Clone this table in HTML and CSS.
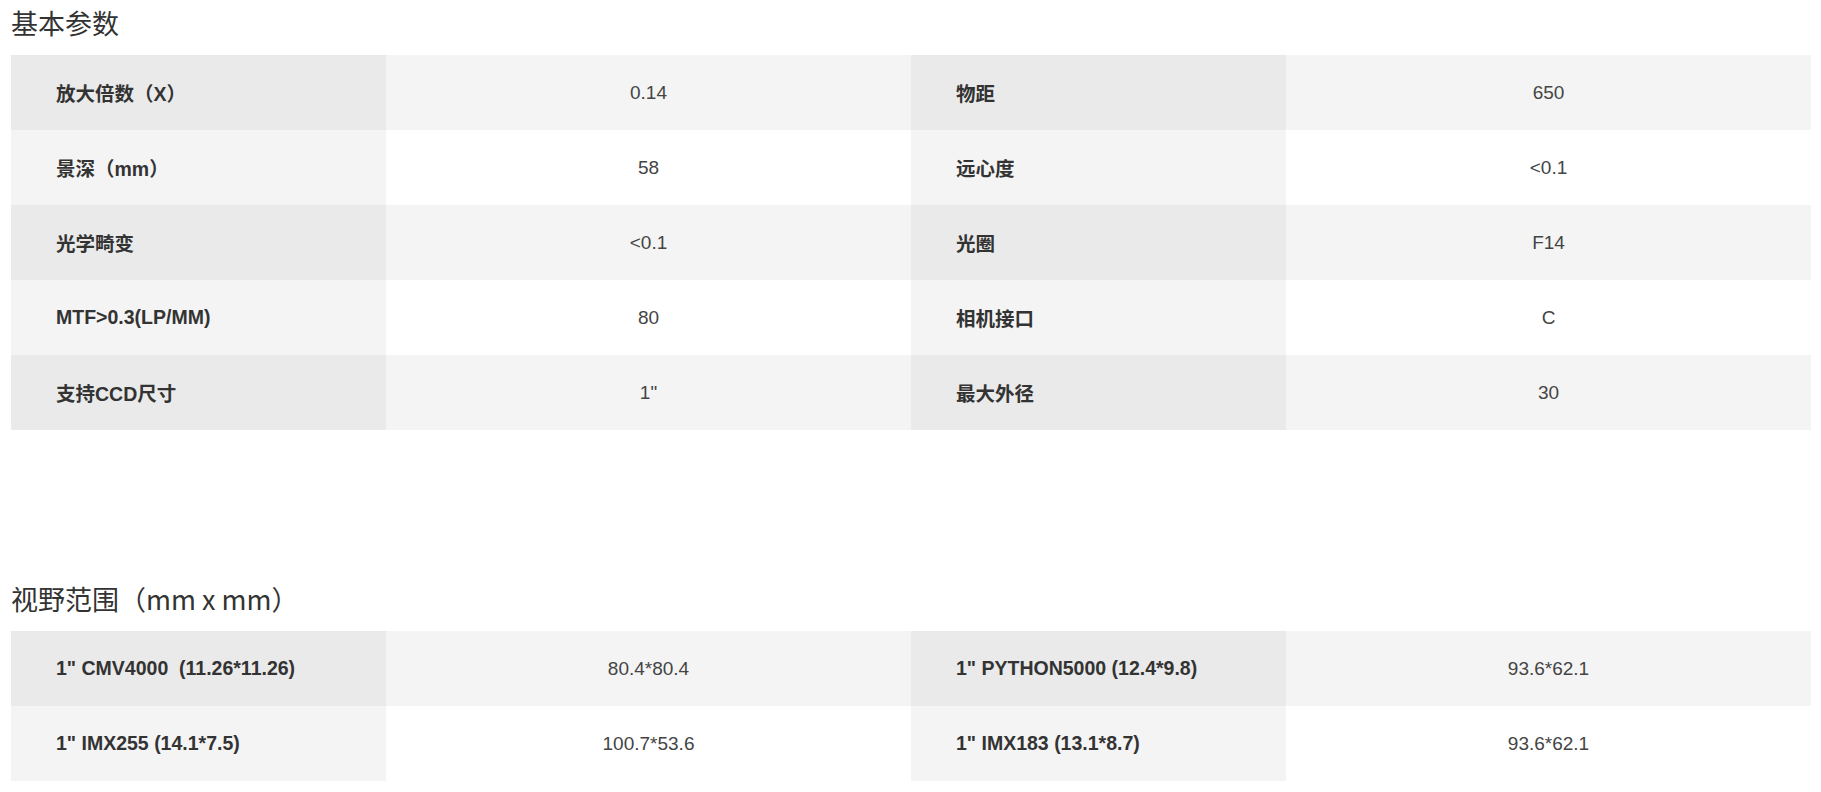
FILE: index.html
```html
<!DOCTYPE html>
<html lang="zh-CN">
<head>
<meta charset="utf-8">
<title>参数</title>
<link rel="stylesheet" href="styles.css">
</head>
<body>
<div class="page">
  <section class="section">
    <h2 class="section-title">基本参数</h2>
    <table class="spec">
      <colgroup>
        <col class="c-label"><col class="c-value"><col class="c-label"><col class="c-value">
      </colgroup>
      <tbody>
        <tr>
          <td class="label">放大倍数（X）</td><td class="value">0.14</td>
          <td class="label">物距</td><td class="value">650</td>
        </tr>
        <tr>
          <td class="label">景深（mm）</td><td class="value">58</td>
          <td class="label">远心度</td><td class="value">&lt;0.1</td>
        </tr>
        <tr>
          <td class="label">光学畸变</td><td class="value">&lt;0.1</td>
          <td class="label">光圈</td><td class="value">F14</td>
        </tr>
        <tr>
          <td class="label">MTF&gt;0.3(LP/MM)</td><td class="value">80</td>
          <td class="label">相机接口</td><td class="value">C</td>
        </tr>
        <tr>
          <td class="label">支持CCD尺寸</td><td class="value">1&quot;</td>
          <td class="label">最大外径</td><td class="value">30</td>
        </tr>
      </tbody>
    </table>
  </section>

  <section class="section section-second">
    <h2 class="section-title">视野范围（mm x mm）</h2>
    <table class="spec">
      <colgroup>
        <col class="c-label"><col class="c-value"><col class="c-label"><col class="c-value">
      </colgroup>
      <tbody>
        <tr>
          <td class="label">1&quot; CMV4000&nbsp; (11.26*11.26)</td><td class="value">80.4*80.4</td>
          <td class="label">1&quot; PYTHON5000 (12.4*9.8)</td><td class="value">93.6*62.1</td>
        </tr>
        <tr>
          <td class="label">1&quot; IMX255 (14.1*7.5)</td><td class="value">100.7*53.6</td>
          <td class="label">1&quot; IMX183 (13.1*8.7)</td><td class="value">93.6*62.1</td>
        </tr>
      </tbody>
    </table>
  </section>
</div>
</body>
</html>
```

FILE: styles.css
```css
html, body {
  margin: 0;
  padding: 0;
  background: #ffffff;
}

body {
  font-family: "Liberation Sans", "Noto Sans CJK SC", sans-serif;
  color: #333333;
}

.page {
  width: 1800px;
  margin: 0 10px 0 11px;
}

.section-title {
  margin: 0 0 9px 0;
  height: 46px;
  line-height: 46px;
  font-family: "Noto Sans CJK SC", "Liberation Sans", sans-serif;
  font-size: 27px;
  font-weight: 400;
  color: #333333;
  white-space: nowrap;
}

.section-second {
  margin-top: 146px;
}

.spec {
  width: 1800px;
  border-collapse: collapse;
  border-spacing: 0;
  table-layout: fixed;
}

.c-label {
  width: 375px;
}

.c-value {
  width: 525px;
}

.spec td {
  height: 75px;
  padding: 0;
  vertical-align: middle;
  white-space: nowrap;
}

.spec tr:nth-child(odd) {
  background: #f4f4f4;
}

.spec tr:nth-child(even) {
  background: #ffffff;
}

.spec tr:nth-child(odd) .label {
  background: #eaeaea;
}

.spec tr:nth-child(even) .label {
  background: #f4f4f4;
}

.label {
  padding-left: 45px !important;
  font-family: "Liberation Sans", "Noto Sans CJK SC", sans-serif;
  font-size: 19.5px;
  font-weight: 700;
  color: #333333;
  text-align: left;
}

.value {
  font-family: "Liberation Sans", "Noto Sans CJK SC", sans-serif;
  font-size: 19px;
  font-weight: 400;
  color: #444444;
  text-align: center;
}
```
